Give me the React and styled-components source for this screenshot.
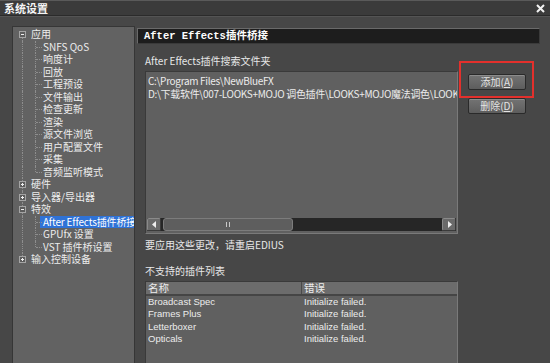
import React from 'react'
import styled, { createGlobalStyle } from 'styled-components'

const GlobalStyle = createGlobalStyle`
  html, body {
    margin: 0;
    padding: 0;
    background: #474747;
  }
  body {
    width: 550px;
    height: 363px;
    overflow: hidden;
    font-family: "Noto Sans CJK SC", "Liberation Sans", sans-serif;
    font-size: 10px;
    color: #e6e6e6;
  }
`

const tree = [
  { label: '应用', level: 0, toggle: '-', first: true },
  { label: 'SNFS QoS', level: 1 },
  { label: '响度计', level: 1 },
  { label: '回放', level: 1 },
  { label: '工程预设', level: 1 },
  { label: '文件输出', level: 1 },
  { label: '检查更新', level: 1 },
  { label: '渲染', level: 1 },
  { label: '源文件浏览', level: 1 },
  { label: '用户配置文件', level: 1 },
  { label: '采集', level: 1 },
  { label: '音频监听模式', level: 1, lastChild: true },
  { label: '硬件', level: 0, toggle: '+' },
  { label: '导入器/导出器', level: 0, toggle: '+' },
  { label: '特效', level: 0, toggle: '-' },
  { label: 'After Effects插件桥接', level: 1, selected: true },
  { label: 'GPUfx 设置', level: 1 },
  { label: 'VST 插件桥设置', level: 1, lastChild: true },
  { label: '输入控制设备', level: 0, toggle: '+', lastRoot: true },
]

const unsupported = [
  { name: 'Broadcast Spec', error: 'Initialize failed.' },
  { name: 'Frames Plus', error: 'Initialize failed.' },
  { name: 'Letterboxer', error: 'Initialize failed.' },
  { name: 'Opticals', error: 'Initialize failed.' },
]

function App() {
  return (
    <>
      <GlobalStyle />
      <Window>
        <TitleBar>
          <Title>系统设置</Title>
          <CloseIcon width="9" height="9" viewBox="0 0 9 9">
            <path d="M1 1 L8 8 M8 1 L1 8" stroke="#f2f2f2" strokeWidth="2" />
          </CloseIcon>
        </TitleBar>
        <Body>
          <TreePanel>
            <TreeList>
              {tree.map((item) => (
                <TreeRow
                  key={item.label}
                  $level={item.level}
                  $first={item.first}
                  $lastRoot={item.lastRoot}
                >
                  {item.toggle && <Toggle $open={item.toggle === '-'} />}
                  {item.level === 1 && <Branch $last={item.lastChild} />}
                  <TreeLabel $selected={item.selected}>{item.label}</TreeLabel>
                </TreeRow>
              ))}
            </TreeList>
          </TreePanel>

          <Pane>
            <PaneHeader>After Effects插件桥接</PaneHeader>
            <PaneContent>
              <Label $top={10}>After Effects插件搜索文件夹</Label>
              <FolderRow>
                <ListBox>
                  <PathList>
                    <PathLine>C:\Program Files\NewBlueFX</PathLine>
                    <PathLine>D:\下载软件\007-LOOKS+MOJO 调色插件\LOOKS+MOJO魔法调色\LOOKS</PathLine>
                  </PathList>
                  <HScroll>
                    <ArrowBtn>
                      <svg width="5" height="7" viewBox="0 0 5 7">
                        <path d="M4 0 L0 3.5 L4 7 Z" fill="#eee" />
                      </svg>
                    </ArrowBtn>
                    <Thumb>
                      <Grip />
                    </Thumb>
                    <Track />
                    <ArrowBtn>
                      <svg width="5" height="7" viewBox="0 0 5 7">
                        <path d="M1 0 L5 3.5 L1 7 Z" fill="#eee" />
                      </svg>
                    </ArrowBtn>
                  </HScroll>
                </ListBox>
                <ButtonColumn>
                  <Highlight />
                  <Button>添加(<Mnemonic>A</Mnemonic>)</Button>
                  <Button>删除(<Mnemonic>D</Mnemonic>)</Button>
                </ButtonColumn>
              </FolderRow>
              <Label $top={4}>要应用这些更改，请重启EDIUS</Label>
              <Label $top={12}>不支持的插件列表</Label>
              <Table>
                <TableHead>
                  <HeadCell $w={156}>名称</HeadCell>
                  <HeadCell>错误</HeadCell>
                </TableHead>
                {unsupported.map((row) => (
                  <TableRow key={row.name}>
                    <Cell $w={156}>{row.name}</Cell>
                    <Cell>{row.error}</Cell>
                  </TableRow>
                ))}
              </Table>
            </PaneContent>
          </Pane>
        </Body>
      </Window>
    </>
  )
}

const Window = styled.div`
  display: flex;
  flex-direction: column;
  width: 550px;
  height: 363px;
  overflow: hidden;
`

const TitleBar = styled.div`
  display: flex;
  align-items: center;
  justify-content: space-between;
  height: 14px;
  padding: 0 5px 0 4px;
  background: #3b3b3b;
  border-top: 1px solid #5a5a5a;
  border-bottom: 1px solid #2b2b2b;
  flex-shrink: 0;
`

const Title = styled.span`
  font-size: 11px;
  font-weight: 700;
  color: #f4f4f4;
  line-height: 14px;
`

const CloseIcon = styled.svg`
  display: block;
`

const Body = styled.div`
  display: flex;
  flex: 1;
  min-height: 0;
  padding: 9px 0 0 12px;
  gap: 1px;
  border-top: 1px solid #545454;
`

const TreePanel = styled.div`
  width: 121px;
  background: #626262;
  border: 1px solid #363636;
  border-bottom: none;
  padding-top: 1px;
  overflow: hidden;
`

const TreeList = styled.ul`
  list-style: none;
  margin: 0;
  padding: 0;
`

const TreeRow = styled.li`
  position: relative;
  display: flex;
  height: 12.5px;
  line-height: 12.5px;
  padding-left: ${(p) => (p.$level ? 30 : 18)}px;
  white-space: nowrap;

  &::before {
    content: '';
    position: absolute;
    left: 9px;
    top: ${(p) => (p.$first ? '6px' : '0')};
    bottom: ${(p) => (p.$lastRoot ? '6px' : '0')};
    border-left: 1px dotted #8e8e8e;
  }
`

const Toggle = styled.span`
  position: absolute;
  left: 6px;
  top: 3px;
  width: 5px;
  height: 5px;
  background: #5c5c5c;
  border: 1px solid #a4a4a4;
  z-index: 1;

  &::before {
    content: '';
    position: absolute;
    left: 1px;
    top: 2px;
    width: 3px;
    height: 1px;
    background: #f0f0f0;
  }

  &::after {
    content: '';
    display: ${(p) => (p.$open ? 'none' : 'block')};
    position: absolute;
    left: 2px;
    top: 1px;
    width: 1px;
    height: 3px;
    background: #f0f0f0;
  }
`

const Branch = styled.span`
  position: absolute;
  left: 22px;
  top: 0;
  height: ${(p) => (p.$last ? '6px' : '100%')};
  border-left: 1px dotted #8e8e8e;

  &::after {
    content: '';
    position: absolute;
    left: 0;
    top: 6px;
    width: 6px;
    border-top: 1px dotted #8e8e8e;
  }
`

const TreeLabel = styled.span`
  height: 12.5px;
  color: #ededed;
  ${(p) =>
    p.$selected &&
    `
    flex: 1;
    background: #2f72d6;
    color: #ffffff;
    margin-left: -3px;
    padding-left: 3px;
    letter-spacing: -0.15px;
  `}
`

const Pane = styled.div`
  flex: 1;
  display: flex;
  flex-direction: column;
  min-width: 0;
`

const PaneHeader = styled.div`
  margin: 2px 10px 0 1px;
  height: 14px;
  line-height: 14px;
  padding-left: 6px;
  background: #1d1d1d;
  border: 1px solid #6a6a6a;
  border-right-color: #3a3a3a;
  border-bottom-color: #3a3a3a;
  font-family: "Liberation Mono", "Noto Sans CJK SC", monospace;
  font-size: 10.5px;
  font-weight: 700;
  color: #ffffff;
  white-space: nowrap;
`

const PaneContent = styled.div`
  display: flex;
  flex-direction: column;
  padding-left: 9px;
`

const Label = styled.div`
  margin-top: ${(p) => p.$top}px;
  height: 14px;
  line-height: 14px;
  color: #e8e8e8;
  white-space: nowrap;
`

const FolderRow = styled.div`
  display: flex;
  align-items: flex-start;
  margin-top: 3px;
`

const ListBox = styled.div`
  display: flex;
  flex-direction: column;
  width: 311px;
  height: 161px;
  background: #606060;
  border: 1px solid #3a3a3a;
  border-right-color: #7a7a7a;
  border-bottom-color: #7a7a7a;
`

const PathList = styled.div`
  flex: 1;
  padding: 3px 2px 0 2px;
  overflow: hidden;
`

const PathLine = styled.div`
  height: 12.5px;
  line-height: 12.5px;
  white-space: nowrap;
  letter-spacing: -0.32px;
  color: #ececec;
`

const HScroll = styled.div`
  display: flex;
  align-items: center;
  height: 13px;
  margin: 0 1px 2px 1px;
  background: #262626;
  gap: 1px;
`

const ArrowBtn = styled.div`
  display: flex;
  align-items: center;
  justify-content: center;
  width: 12px;
  height: 11px;
  background: #6a6a6a;
  border: 1px solid #8a8a8a;
  border-right-color: #3a3a3a;
  border-bottom-color: #3a3a3a;
  border-radius: 2px;
`

const Thumb = styled.div`
  display: flex;
  align-items: center;
  justify-content: center;
  width: 128px;
  height: 11px;
  margin-left: 1px;
  background: #5e5e5e;
  border: 1px solid #7c7c7c;
  border-radius: 3px;
`

const Grip = styled.span`
  width: 4px;
  height: 5px;
  border-left: 1px solid #c8c8c8;
  border-right: 1px solid #c8c8c8;
  box-sizing: border-box;
`

const Track = styled.div`
  flex: 1;
`

const ButtonColumn = styled.div`
  position: relative;
  display: flex;
  flex-direction: column;
  gap: 8px;
  margin: 3px 0 0 10px;
`

const Highlight = styled.div`
  position: absolute;
  left: -9px;
  top: -13px;
  width: 71px;
  height: 33px;
  border: 2px solid #e3302c;
  pointer-events: none;
`

const Button = styled.div`
  width: 56px;
  height: 14px;
  line-height: 14px;
  text-align: center;
  color: #e4e4e4;
  font-size: 10px;
  background: linear-gradient(#737373, #5d5d5d);
  border: 1px solid #2a2a2a;
  border-radius: 2px;
  box-shadow: inset 0 1px 0 #8c8c8c;
`

const Mnemonic = styled.span`
  text-decoration: underline;
  text-underline-offset: 1px;
`

const Table = styled.div`
  width: 311px;
  height: 90px;
  margin-top: 3px;
  background: #606060;
  border: 1px solid #3a3a3a;
  border-right-color: #7a7a7a;
`

const TableHead = styled.div`
  display: flex;
  height: 12px;
  background: #6c6c6c;
  border-bottom: 2px solid #454545;
`

const HeadCell = styled.div`
  ${(p) => (p.$w ? `width: ${p.$w - 3}px;` : 'flex: 1;')}
  padding-left: 2px;
  line-height: 12px;
  font-size: 10.5px;
  color: #ececec;
  border-right: ${(p) => (p.$w ? '1px solid #4a4a4a' : 'none')};
`

const TableRow = styled.div`
  display: flex;
  height: 12.4px;
  line-height: 12.4px;
`

const Cell = styled.div`
  ${(p) => (p.$w ? `width: ${p.$w - 2}px;` : 'flex: 1;')}
  padding-left: 2px;
  font-family: "Liberation Sans", "Noto Sans CJK SC", sans-serif;
  font-size: 9.5px;
  color: #ececec;
  white-space: nowrap;
`

export default App
